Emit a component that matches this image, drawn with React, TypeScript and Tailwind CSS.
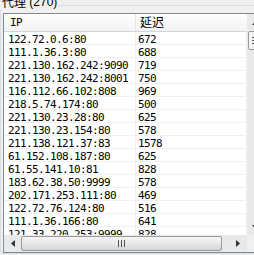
import React from "react";

const rows: [string, string][] = [
  ["122.72.0.6:80", "672"],
  ["111.1.36.3:80", "688"],
  ["221.130.162.242:9090", "719"],
  ["221.130.162.242:8001", "750"],
  ["116.112.66.102:808", "969"],
  ["218.5.74.174:80", "500"],
  ["221.130.23.28:80", "625"],
  ["221.130.23.154:80", "578"],
  ["211.138.121.37:83", "1578"],
  ["61.152.108.187:80", "625"],
  ["61.55.141.10:81", "828"],
  ["183.62.38.50:9999", "578"],
  ["202.171.253.111:80", "469"],
  ["122.72.76.124:80", "516"],
  ["111.1.36.166:80", "641"],
  ["121.33.220.253:9999", "828"],
  ["121.33.220.253:9998", "828"],
];

const mono = "font-['DejaVu_Sans_Mono',monospace] text-[11px] tracking-[-0.62px]";
const cjk = "font-['Noto_Sans_CJK_SC','Liberation_Sans',sans-serif] text-[12px]";

function Arrow({ dir }: { dir: "up" | "down" | "left" | "right" }) {
  const pts =
    dir === "up"
      ? "0,4 7,4 3.5,0"
      : dir === "down"
      ? "0,0 7,0 3.5,4"
      : dir === "left"
      ? "4,0 4,7 0,3.5"
      : "0,0 0,7 4,3.5";
  const w = dir === "up" || dir === "down" ? 7 : 4;
  const h = dir === "up" || dir === "down" ? 4 : 7;
  return (
    <svg width={w} height={h} viewBox={`0 0 ${w} ${h}`}>
      <polygon points={pts} fill="#333" />
    </svg>
  );
}

export default function App() {
  return (
    <div className="relative w-[254px] h-[255px] overflow-hidden bg-[#f0f0f0]">
      <div className="relative mt-[5px] w-[300px] h-[249px] border border-[#d5dfe5] rounded-[3px]">
        <div className="absolute left-[-1px] top-[-11px] h-[15px] pl-[2px] pr-[1px] bg-[#f0f0f0] flex items-start leading-[14px] text-black">
          <span className={cjk}>代理</span>
          <span className="font-['Liberation_Sans',sans-serif] text-[12px]">&nbsp;(270)</span>
        </div>
        <div className="ml-[2px] mt-[7px] w-[262px] h-[240px] border border-[#828790] bg-white flex">
          <div className="w-[243px] flex flex-col">
            <div className="h-[18px] flex border-b border-[#d5d5d5] bg-gradient-to-b from-white to-[#f2f3f5]">
              <div className={`w-[132px] border-r border-[#e3e5e8] pl-[6px] pt-[3px] leading-[11px] ${mono}`}>IP</div>
              <div className={`w-[111px] pl-[4px] leading-[16px] ${cjk}`}>延迟</div>
            </div>
            <div className="flex-1 overflow-hidden">
              {rows.map(([ip, d], i) => (
                <div key={i} className={`h-[13px] flex border-b border-[#f0f0f0] text-black ${mono}`}>
                  <div className="w-[132px] border-r border-[#f0f0f0] pl-[4px] pt-[3px] leading-[9px] whitespace-nowrap overflow-hidden">{ip}</div>
                  <div className="w-[111px] border-r border-[#f0f0f0] pl-[2px] pt-[3px] leading-[9px]">{d}</div>
                </div>
              ))}
            </div>
            <div className="h-[17px] flex bg-[#e9e9e9]">
              <div className="w-[17px] flex items-center justify-center pl-[1px]">
                <Arrow dir="left" />
              </div>
              <div className="w-[201px] my-[1px] rounded-[2px] border border-[#9a9a9a] bg-gradient-to-b from-[#f6f6f6] via-[#e8e8e8] to-[#d4d4d4] flex items-center justify-center">
                <div className="flex gap-[2px]">
                  <div className="w-[1px] h-[7px] bg-[#555]" />
                  <div className="w-[1px] h-[7px] bg-[#555]" />
                  <div className="w-[1px] h-[7px] bg-[#555]" />
                </div>
              </div>
              <div className="flex-1 flex items-center justify-end pr-[7px]">
                <Arrow dir="right" />
              </div>
            </div>
          </div>
          <div className="w-[17px] flex flex-col bg-[#e9e9e9]">
            <div className="h-[17px] flex items-center justify-center">
              <Arrow dir="up" />
            </div>
            <div className="h-[19px] mx-[1px] rounded-[2px] border border-[#9a9a9a] bg-gradient-to-r from-[#f6f6f6] via-[#e8e8e8] to-[#d4d4d4] flex items-center justify-center">
              <div className="flex flex-col gap-[2px]">
                <div className="w-[7px] h-[1px] bg-[#555]" />
                <div className="w-[7px] h-[1px] bg-[#555]" />
                <div className="w-[7px] h-[1px] bg-[#555]" />
              </div>
            </div>
            <div className="flex-1" />
            <div className="h-[17px] flex items-center justify-center">
              <Arrow dir="down" />
            </div>
            <div className="h-[17px] bg-[#f0f0f0]" />
          </div>
        </div>
      </div>
    </div>
  );
}
